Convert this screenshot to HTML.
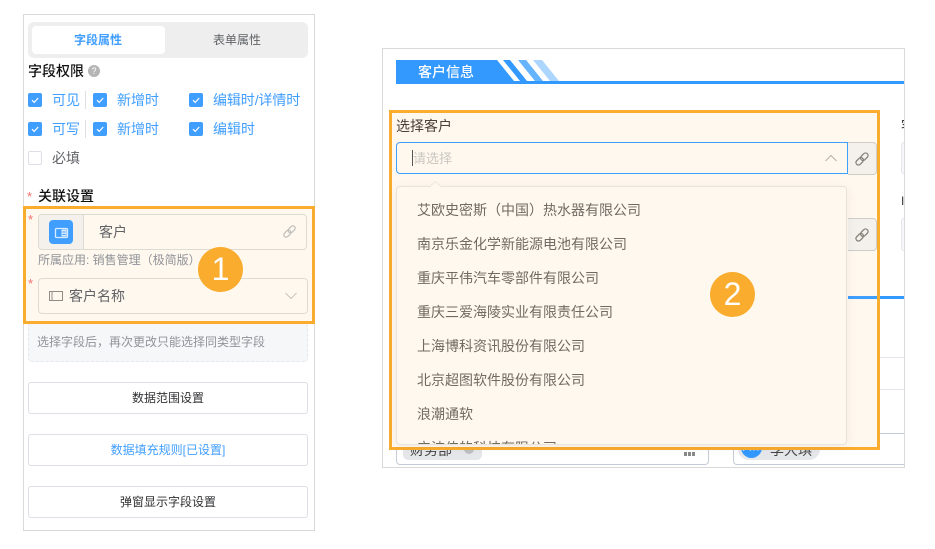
<!DOCTYPE html>
<html><head><meta charset="utf-8">
<style>
html,body{margin:0;padding:0;background:#fff}
body{width:935px;height:549px;position:relative;overflow:hidden;font-family:"Liberation Sans","Noto Sans CJK SC",sans-serif;font-size:12px;color:#333}
.a{position:absolute;box-sizing:border-box}
.t{position:absolute;white-space:nowrap;line-height:18px}
.cb{position:absolute;width:14px;height:14px;background:#409eff;border-radius:2px}
.cb svg{position:absolute;left:0;top:0}
.blue{color:#409eff}
.btn{position:absolute;left:28px;width:280px;height:32px;border:1px solid #dcdfe6;border-radius:3px;box-sizing:border-box;text-align:center;line-height:30px;font-size:12px;color:#303133;background:#fff}
.opt{position:absolute;left:417px;font-size:14px;line-height:18px;color:#6f6a62;white-space:nowrap}
.req{position:absolute;color:#f56c6c;font-size:13px;line-height:12px}
</style></head>
<body>
<!-- left panel -->
<div class="a" style="left:23px;top:14px;width:292px;height:517px;border:1px solid #d9d9d9"></div>
<div class="a" style="left:28px;top:22px;width:280px;height:36px;background:#eee;border-radius:6px"></div>
<div class="a" style="left:32px;top:26px;width:133px;height:28px;background:#fff;border-radius:4px"></div>
<div class="t blue" style="left:74px;top:31px;font-weight:bold;color:#409eff">字段属性</div>
<div class="t" style="left:213px;top:31px;color:#606266">表单属性</div>
<div class="t" style="left:28px;top:62px;font-size:14px;color:#111;font-weight:500">字段权限</div>
<div class="a" style="left:88px;top:65px;width:12px;height:12px;border-radius:50%;background:#b5b5b5;color:#fff;font-size:9px;line-height:12px;text-align:center">?</div>

<div class="cb" style="left:28px;top:93px"><svg width="14" height="14"><path d="M4 7.200l2.200 2.200 4-4.400" fill="none" stroke="#fff" stroke-width="1.200"/></svg></div>
<div class="t" style="left:52px;top:91px;font-size:14px;color:#409eff">可见</div>
<div class="a" style="left:85px;top:91px;width:1px;height:18px;background:#dcdfe6"></div>
<div class="cb" style="left:93px;top:93px"><svg width="14" height="14"><path d="M4 7.200l2.200 2.200 4-4.400" fill="none" stroke="#fff" stroke-width="1.200"/></svg></div>
<div class="t" style="left:117px;top:91px;font-size:14px;color:#409eff">新增时</div>
<div class="cb" style="left:189px;top:93px"><svg width="14" height="14"><path d="M4 7.200l2.200 2.200 4-4.400" fill="none" stroke="#fff" stroke-width="1.200"/></svg></div>
<div class="t" style="left:213px;top:91px;font-size:14px;color:#409eff;letter-spacing:-.1px">编辑时/详情时</div>

<div class="cb" style="left:28px;top:122px"><svg width="14" height="14"><path d="M4 7.200l2.200 2.200 4-4.400" fill="none" stroke="#fff" stroke-width="1.200"/></svg></div>
<div class="t" style="left:52px;top:120px;font-size:14px;color:#409eff">可写</div>
<div class="a" style="left:85px;top:120px;width:1px;height:18px;background:#dcdfe6"></div>
<div class="cb" style="left:93px;top:122px"><svg width="14" height="14"><path d="M4 7.200l2.200 2.200 4-4.400" fill="none" stroke="#fff" stroke-width="1.200"/></svg></div>
<div class="t" style="left:117px;top:120px;font-size:14px;color:#409eff">新增时</div>
<div class="cb" style="left:189px;top:122px"><svg width="14" height="14"><path d="M4 7.200l2.200 2.200 4-4.400" fill="none" stroke="#fff" stroke-width="1.200"/></svg></div>
<div class="t" style="left:213px;top:120px;font-size:14px;color:#409eff">编辑时</div>

<div class="a" style="left:28px;top:151px;width:14px;height:14px;border:1px solid #dcdfe6;border-radius:2px;background:#fff"></div>
<div class="t" style="left:52px;top:149px;font-size:14px;color:#606266">必填</div>

<div class="req" style="left:27px;top:191px">*</div>
<div class="t" style="left:38px;top:187px;font-size:14px;color:#111;font-weight:500">关联设置</div>

<div class="a" style="left:28px;top:322px;width:280px;height:40px;background:#f6f7f9;border:1px dashed #e4e7ed;border-radius:4px"></div>
<div class="t" style="left:37px;top:333px;color:#909399">选择字段后，再次更改只能选择同类型字段</div>

<!-- orange box 1 -->
<div class="a" style="left:23px;top:206px;width:292px;height:118px;background:#fff8ee;border:3px solid #f9ac2e"></div>
<div class="req" style="left:28px;top:214px">*</div>
<div class="a" style="left:38px;top:214px;width:269px;height:36px;border:1px solid #dedbd3;border-radius:4px;background:#fff8ee"></div>
<div class="a" style="left:39px;top:215px;width:45px;height:34px;background:#f4f1ec;border-right:1px solid #dedbd3;border-radius:4px 0 0 4px"></div>
<div class="a" style="left:49px;top:220px;width:24px;height:24px;background:#409eff;border-radius:4px"></div>
<svg class="a" style="left:49px;top:220px" width="24" height="24"><rect x="6.500" y="8.500" width="12" height="9" rx="1" fill="none" stroke="#d8ecff" stroke-width="1.300"/><rect x="12.500" y="9.500" width="5" height="7" fill="#d8ecff"/><path d="M13.500 12h3M13.500 14.500h3" stroke="#409eff"/></svg>
<div class="t" style="left:99px;top:223px;font-size:14px;color:#606266">客户</div>
<svg class="a" style="left:282px;top:224px" width="15" height="15" viewBox="0 0 16 16"><g fill="none" stroke="#c2c0bc" stroke-width="1.400" transform="rotate(-45 8 8)"><rect x="0.500" y="5.500" width="8.500" height="5" rx="2.500"/><rect x="7" y="5.500" width="8.500" height="5" rx="2.500"/></g></svg>
<div class="t" style="left:38px;top:251px;color:#909399">所属应用: 销售管理（极简版）</div>
<div class="req" style="left:28px;top:278px">*</div>
<div class="a" style="left:38px;top:278px;width:270px;height:36px;border:1px solid #dedbd3;border-radius:4px;background:#fff8ee"></div>
<svg class="a" style="left:49px;top:291px" width="14" height="11"><rect x=".5" y=".5" width="13" height="9" fill="none" stroke="#918c85"/><path d="M3 1v8" stroke="#918c85"/></svg>
<div class="t" style="left:69px;top:287px;font-size:14px;color:#606266">客户名称</div>
<svg class="a" style="left:285px;top:292px" width="12" height="8"><path d="M.5 1l5.500 5.500L11.500 1" fill="none" stroke="#c9c6c0"/></svg>

<div class="a" style="left:198px;top:247px;width:45px;height:45px;border-radius:50%;background:#f9ac2e;color:#fff;font-size:32px;line-height:45px;text-align:center">1</div>

<div class="btn" style="top:382px">数据范围设置</div>
<div class="btn" style="top:434px;color:#409eff">数据填充规则[已设置]</div>
<div class="btn" style="top:486px">弹窗显示字段设置</div>

<!-- right panel -->
<div class="a" style="left:382px;top:48px;width:523px;height:420px;border:1px solid #d9d9d9;background:#fff"></div>
<svg class="a" style="left:396px;top:60px" width="508" height="24">
<path d="M0 0H101L118 21H0Z" fill="#3399ff"/>
<path d="M107 0H114L131 21H124Z" fill="#3399ff"/>
<path d="M122 0H130L147 21H139Z" fill="#66b3ff"/>
<path d="M137 0H146L163 21H154Z" fill="#add6ff"/>
<rect x="0" y="21" width="508" height="3" fill="#3399ff"/>
</svg>
<div class="t" style="left:418px;top:63px;font-size:14px;color:#fff;font-weight:500">客户信息</div>

<div class="a" style="left:901px;top:142px;width:3px;height:32px;background:#f7f7fa;border:1px solid #e4e7ed;border-right:0;border-radius:3px 0 0 3px"></div>
<div class="a" style="left:901px;top:218px;width:3px;height:33px;background:#f7f7fa;border:1px solid #e4e7ed;border-right:0;border-radius:3px 0 0 3px"></div>
<div class="a" style="left:880px;top:296px;width:24px;height:3px;background:#3399ff"></div>
<div class="a" style="left:880px;top:357px;width:24px;height:1px;background:#e4e7ed"></div>
<div class="a" style="left:880px;top:389px;width:24px;height:1px;background:#e4e7ed"></div>
<div class="t" style="left:901px;top:117px;font-size:14px;color:#333;width:3px;overflow:hidden">客</div>
<div class="t" style="left:901px;top:192px;font-size:12px;color:#333;width:3px;overflow:hidden">I</div>

<!-- bottom fields -->
<div class="a" style="left:396px;top:433px;width:313px;height:32px;border:1px solid #c5cbd8;border-radius:4px;background:#fff"></div>
<div class="a" style="left:403px;top:438px;width:79px;height:22px;background:#e6e7ea;border-radius:5px"></div>
<div class="t" style="left:410px;top:441px;font-size:14px;color:#444">财务部</div>
<div class="a" style="left:464px;top:444px;width:10px;height:10px;border-radius:50%;background:#bfc0c3"></div>
<svg class="a" style="left:683px;top:444px" width="14" height="14"><rect x="4.500" y="1" width="4" height="4" fill="#8a8a8a"/><rect x="1" y="8" width="3" height="4" fill="#8a8a8a"/><rect x="5" y="8" width="3" height="4" fill="#8a8a8a"/><rect x="9" y="8" width="3" height="4" fill="#8a8a8a"/></svg>
<div class="a" style="left:733px;top:433px;width:171px;height:32px;border:1px solid #c5cbd8;border-right:0;border-radius:4px 0 0 4px;background:#fff"></div>
<div class="a" style="left:738px;top:438px;width:82px;height:22px;background:#e6e7ea;border-radius:11px"></div>
<div class="a" style="left:741px;top:437px;width:21px;height:21px;background:#3399ff;border-radius:50%;color:#fff;font-size:9px;line-height:21px;text-align:center">大林</div>
<div class="t" style="left:770px;top:441px;font-size:14px;color:#444">李大琪</div>

<!-- orange box 2 -->
<div class="a" style="left:389px;top:110px;width:491px;height:340px;background:#fff8ee;border:3px solid #f9ac2e"></div>
<div class="t" style="left:396px;top:117px;font-size:14px;color:#4a4038">选择客户</div>
<div class="a" style="left:396px;top:142px;width:452px;height:32px;border:1px solid #409eff;border-radius:4px 0 0 4px;background:#fff8ee"></div>
<div class="a" style="left:412px;top:150px;width:1px;height:16px;background:#555"></div>
<div class="t" style="left:413px;top:150px;font-size:13px;color:#c9c6c0">请选择</div>
<svg class="a" style="left:825px;top:154px" width="12" height="8"><path d="M.5 7L6 1.500 11.500 7" fill="none" stroke="#b5b2ac"/></svg>
<div class="a" style="left:848px;top:142px;width:29px;height:33px;border:1px solid #cfcdc8;border-left:0;border-radius:0 4px 4px 0;background:#f4f1ec"></div>
<svg class="a" style="left:854px;top:151px" width="16" height="16" viewBox="0 0 16 16"><g fill="none" stroke="#85817b" stroke-width="1.300" transform="rotate(-45 8 8)"><rect x="0.500" y="5.500" width="8.500" height="5" rx="2.500"/><rect x="7" y="5.500" width="8.500" height="5" rx="2.500"/></g></svg>
<div class="a" style="left:848px;top:218px;width:29px;height:33px;border:1px solid #cfcdc8;border-left:0;border-radius:0 4px 4px 0;background:#f4f1ec"></div>
<svg class="a" style="left:854px;top:227px" width="16" height="16" viewBox="0 0 16 16"><g fill="none" stroke="#85817b" stroke-width="1.300" transform="rotate(-45 8 8)"><rect x="0.500" y="5.500" width="8.500" height="5" rx="2.500"/><rect x="7" y="5.500" width="8.500" height="5" rx="2.500"/></g></svg>
<div class="a" style="left:848px;top:296px;width:29px;height:3px;background:#409eff"></div>

<!-- dropdown -->
<div class="a" style="left:396px;top:186px;width:451px;height:259px;background:#fff8ee;border:1px solid #e7e3da;border-radius:4px;box-shadow:0 2px 12px rgba(0,0,0,.06);overflow:hidden"></div>
<svg class="a" style="left:429px;top:181px" width="14" height="7"><path d="M0 6.500L6.500 .5 13 6.500" fill="#fff8ee" stroke="#ece8df"/></svg>
<div class="opt" style="top:201px">艾欧史密斯（中国）热水器有限公司</div>
<div class="opt" style="top:235px">南京乐金化学新能源电池有限公司</div>
<div class="opt" style="top:269px">重庆平伟汽车零部件有限公司</div>
<div class="opt" style="top:303px">重庆三爱海陵实业有限责任公司</div>
<div class="opt" style="top:337px">上海博科资讯股份有限公司</div>
<div class="opt" style="top:371px">北京超图软件股份有限公司</div>
<div class="opt" style="top:405px">浪潮通软</div>
<div class="a" style="left:397px;top:432px;width:449px;height:12px;overflow:hidden"><div class="t" style="left:20px;top:7px;font-size:14px;color:#6f6a62">宁波伟的科技有限公司</div></div>

<div class="a" style="left:710px;top:272px;width:45px;height:45px;border-radius:50%;background:#f9ac2e;color:#fff;font-size:32px;line-height:45px;text-align:center">2</div>
</body></html>
